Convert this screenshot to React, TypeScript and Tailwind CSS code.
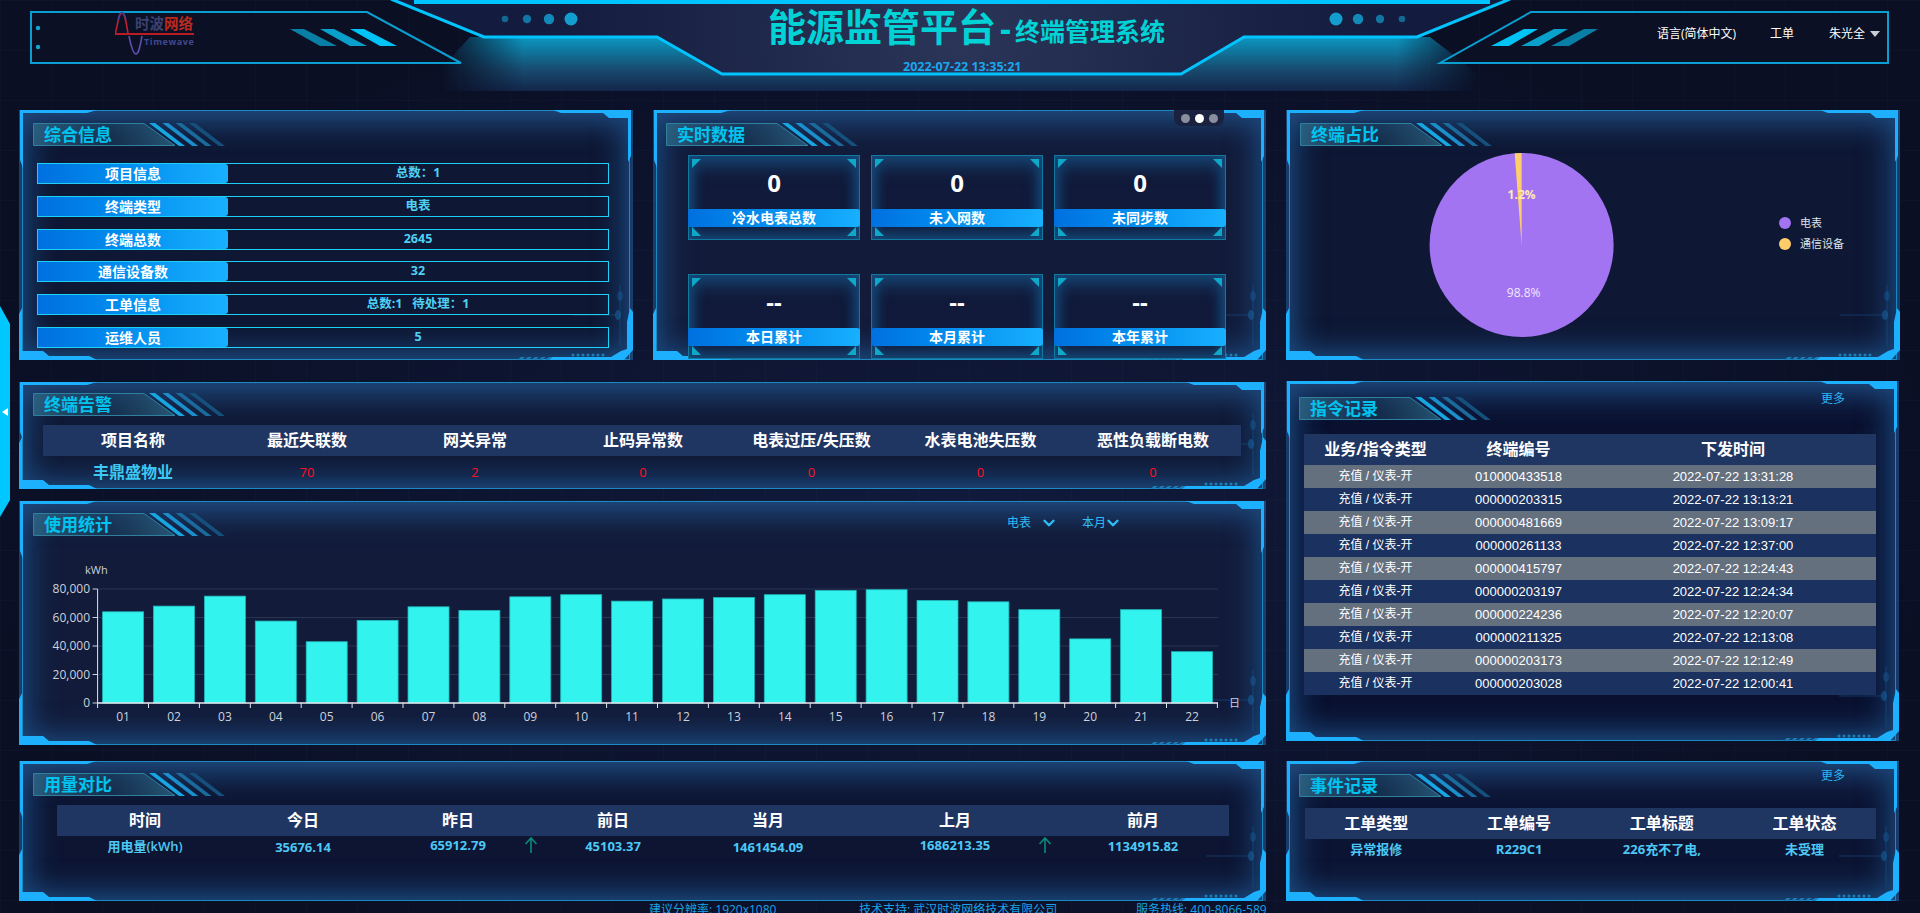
import React from "react";
import { ChevronDown } from "lucide-react";

const BR = "#1cb0ff";

function Frame({ w, h }: { w: number; h: number }) {
  const dots = [0, 1, 2, 3, 4, 5, 6];
  return (
    <svg className="absolute left-0 top-0 pointer-events-none" width={w} height={h} viewBox={`0 0 ${w} ${h}`}>
      <rect x={3.5} y={0.5} width={w - 7} height={h - 1} fill="none" stroke="#1b8ac2" strokeWidth={1} />
      <polygon fill={BR} points={`1,0 78,0 68,3 4,3 4,58 1,50`} />
      <polygon fill={BR} points={`${w - 80},0 ${w - 2},0 ${w - 2},46 ${w - 5},52 ${w - 5},8 ${w - 24},8 ${w - 30},3 ${w - 72},3`} />
      <polygon fill={BR} points={`0,${h - 46} 3,${h - 52} 3,${h - 9} 24,${h - 9} 30,${h - 4} 70,${h - 4} 78,${h} 0,${h}`} />
      <polygon
        fill={BR}
        points={`${w},${h - 48} ${w},${h - 10} ${w - 9},${h} ${w - 90},${h} ${w - 82},${h - 3} ${w - 22},${h - 3} ${w - 12},${h - 9} ${w - 6},${h - 11} ${w - 6},${h - 38} ${w - 3},${h - 52}`}
      />
      {dots.map((d) => (
        <circle key={d} cx={w - 60 + d * 5} cy={h - 5} r={1.5} fill="#1a7fb8" />
      ))}
      {[0, 1, 2, 3, 4].map((d) => (
        <polygon key={d} fill="#1a7fb8" points={`${w - 116 + d * 7},${h} ${w - 112 + d * 7},${h - 3} ${w - 108 + d * 7},${h - 3} ${w - 112 + d * 7},${h}`} />
      ))}
      <path d={`M${w - 13} ${h - 75} V${h - 14} M${w - 60} ${h - 45} H${w - 17}`} stroke="#1a5f98" strokeWidth={1} fill="none" opacity={0.45} />
      <ellipse cx={w - 15} cy={h - 45} rx={3} ry={5} fill="#1a6aa8" opacity={0.5} />
      <ellipse cx={w - 13} cy={h - 64} rx={3} ry={5} fill="#1a6aa8" opacity={0.35} />
    </svg>
  );
}

function Title({ text, className }: { text: string; className: string }) {
  return (
    <div className={`relative h-[23px] w-[196px] ${className}`}>
      <svg className="absolute left-0 top-0" width={196} height={23} viewBox="0 0 196 23">
        <defs>
          <linearGradient id="tg" x1="0" x2="1" y1="0" y2="0">
            <stop offset="0" stopColor="#2c6684" stopOpacity={0.85} />
            <stop offset="0.55" stopColor="#1c4260" stopOpacity={0.5} />
            <stop offset="1" stopColor="#2c6684" stopOpacity={0.8} />
          </linearGradient>
        </defs>
        <polygon points="0.5,0.5 111,0.5 142,22.5 0.5,22.5" fill="url(#tg)" stroke="#2f7f9f" strokeWidth={1} />
        {["#16a6e2", "#1a8fcb", "#1b6a9c", "#15507c"].map((c, i) => (
          <polygon key={c} fill={c} points={`${116 + 13.3 * i},0 ${122 + 13.3 * i},0 ${152 + 13.3 * i},23 ${146 + 13.3 * i},23`} />
        ))}
      </svg>
      <span className="relative block pl-[11px] text-[17px] font-bold leading-[23px] text-[#00c4f0]">{text}</span>
    </div>
  );
}

function Panel({
  w,
  h,
  sizeClass,
  bgClass,
  children,
}: {
  w: number;
  h: number;
  sizeClass: string;
  bgClass: string;
  children: React.ReactNode;
}) {
  return (
    <div
      className={`relative shrink-0 ${sizeClass} ${bgClass} shadow-[inset_0_30px_28px_-16px_#1f4a7e,inset_0_-26px_28px_-16px_#1c4a7e,inset_30px_0_30px_-20px_#1c4a7e,inset_-30px_0_30px_-20px_#1c4a7e]`}
    >
      <Frame w={w} h={h} />
      <div className="relative flow-root">{children}</div>
    </div>
  );
}

const infoRows = [
  ["项目信息", "总数：1"],
  ["终端类型", "电表"],
  ["终端总数", "2645"],
  ["通信设备数", "32"],
  ["工单信息", "总数:1   待处理：1"],
  ["运维人员", "5"],
];

const cards = [
  ["0", "冷水电表总数"],
  ["0", "未入网数"],
  ["0", "未同步数"],
  ["--", "本日累计"],
  ["--", "本月累计"],
  ["--", "本年累计"],
];

const alarmHead = ["项目名称", "最近失联数", "网关异常", "止码异常数", "电表过压/失压数", "水表电池失压数", "恶性负载断电数"];
const alarmVals = ["70", "2", "0", "0", "0", "0"];

const usage = [64000, 68000, 75000, 57500, 43000, 58000, 67500, 65000, 74500, 76000, 71500, 73000, 74000, 76000, 79000, 79500, 72000, 71000, 65500, 45000, 65500, 36000];

const cmpHead = ["时间", "今日", "昨日", "前日", "当月", "上月", "前月"];
const cmpVals = ["用电量(kWh)", "35676.14", "65912.79", "45103.37", "1461454.09", "1686213.35", "1134915.82"];
const cmpPad = ["pt-[1px]", "pt-[2px]", "pt-0", "pt-[1px]", "pt-[2px]", "pt-0", "pt-[1px]"];

const cmds = [
  ["010000433518", "2022-07-22 13:31:28"],
  ["000000203315", "2022-07-22 13:13:21"],
  ["000000481669", "2022-07-22 13:09:17"],
  ["000000261133", "2022-07-22 12:37:00"],
  ["000000415797", "2022-07-22 12:24:43"],
  ["000000203197", "2022-07-22 12:24:34"],
  ["000000224236", "2022-07-22 12:20:07"],
  ["000000211325", "2022-07-22 12:13:08"],
  ["000000203173", "2022-07-22 12:12:49"],
  ["000000203028", "2022-07-22 12:00:41"],
];

function HeaderArt() {
  const slashes = (x: number, dir: number) =>
    [0, 1, 2].map((i) => {
      const colors = dir > 0 ? ["#0a7fa6", "#0aa0cc", "#00c4f5"] : ["#00c4f5", "#0aa0cc", "#0a7fa6"];
      const base = x + i * 30;
      return dir > 0 ? (
        <polygon key={i} fill={colors[i]} points={`${base},29 ${base + 14},29 ${base + 47},46 ${base + 30},46`} />
      ) : (
        <polygon key={i} fill={colors[i]} points={`${base + 33},29 ${base + 47},29 ${base + 18},46 ${base},46`} />
      );
    });
  return (
    <svg className="absolute left-0 top-0" width={1920} height={110} viewBox="0 0 1920 110">
      <defs>
        <linearGradient id="hg" x1="0" x2="0" y1="36" y2="91" gradientUnits="userSpaceOnUse">
          <stop offset="0" stopColor="#0a9ac4" />
          <stop offset="0.6" stopColor="#174c70" />
          <stop offset="1" stopColor="#13264a" />
        </linearGradient>
        <linearGradient id="hm" x1="440" x2="1480" y1="0" y2="0" gradientUnits="userSpaceOnUse">
          <stop offset="0" stopColor="#000" />
          <stop offset="0.08" stopColor="#fff" />
          <stop offset="0.92" stopColor="#fff" />
          <stop offset="1" stopColor="#000" />
        </linearGradient>
        <mask id="hmask" maskUnits="userSpaceOnUse" x="0" y="0" width="1920" height="110">
          <rect x="0" y="0" width="1920" height="110" fill="url(#hm)" />
        </mask>
        <radialGradient id="hp" cx="960" cy="40" r="420" gradientUnits="userSpaceOnUse">
          <stop offset="0" stopColor="#2a3558" />
          <stop offset="1" stopColor="#131b3e" />
        </radialGradient>
      </defs>
      <path d="M470 37 H657 L722 74 H1181 L1244 37 H1430 L1500 91 H420 Z" fill="url(#hg)" mask="url(#hmask)" />
      <polygon points="395,0 1508,0 1417,37 1244,37 1181,74 722,74 657,37 484,37" fill="url(#hp)" />
      <polyline points="391,-1 484,37 657,37 722,74 1181,74 1244,37 1417,37 1510,-1" fill="none" stroke="#00c4ff" strokeWidth={3} />
      <rect x={414} y={0} width={1076} height={4} fill="#00c4ff" />
      {[
        [505, 3.3, 0.55],
        [527, 4.2, 0.65],
        [549, 5.2, 0.8],
        [571, 6.5, 0.95],
        [1336, 6.5, 0.95],
        [1358, 5.2, 0.8],
        [1380, 4.2, 0.65],
        [1402, 3.3, 0.55],
      ].map(([x, r, o]) => (
        <circle key={x} cx={x} cy={19} r={r} fill="#12a6d8" opacity={o} />
      ))}
      <polygon points="31,12 367,12 461,63 31,63" fill="#0b1024" fillOpacity={0.6} stroke="#0a9fd0" strokeWidth={2} />
      <polygon points="1531,12 1888,12 1888,63 1440,63" fill="#0b1024" fillOpacity={0.6} stroke="#0a9fd0" strokeWidth={2} />
      <circle cx={38} cy={28} r={2.2} fill="#0fa8d0" />
      <circle cx={38} cy={47} r={2.2} fill="#0fa8d0" />
      {slashes(290, 1)}
      {slashes(1491, -1)}
    </svg>
  );
}

function Logo() {
  return (
    <div className="relative h-[44px] w-[80px]">
      <svg className="absolute left-0 top-0" width={80} height={44} viewBox="0 0 80 44">
        <path d="M0.5 21 C3 10 4 1 7 1 C10 1 11 10 13 21" fill="none" stroke="#c02030" strokeWidth={1.6} />
        <path d="M3 8 C4 3 5 0.5 7 0.5 C9 0.5 10 3 11 8" fill="none" stroke="#3a3f9a" strokeWidth={1.4} />
        <rect x={0} y={21} width={79} height={2} fill="#b81c24" />
        <path d="M14 24 C16 34 18 42 21 42 C24 42 25 34 27 24" fill="none" stroke="#5a50b0" strokeWidth={1.6} />
      </svg>
      <span className="absolute left-[20px] top-[2px] whitespace-nowrap text-[14.5px] font-bold leading-[19px]">
        <span className="text-[#3b4170]">时波</span>
        <span className="text-[#b82a20]">网络</span>
      </span>
      <span className="absolute left-[29px] top-[24px] whitespace-nowrap text-[9px] font-bold leading-[11px] tracking-[0.6px] text-[#41488f]">
        Timewave
      </span>
    </div>
  );
}

function Header() {
  return (
    <div className="relative flex h-[110px]">
      <HeaderArt />
      <div className="relative w-[768px] shrink-0 pl-[115px] pt-[12px]">
        <Logo />
      </div>
      <div className="relative w-[410px] shrink-0">
        <div className="h-[50px] whitespace-nowrap pt-[1px] text-[#00d2d6]">
          <span className="text-[38px] font-bold leading-[50px]">能源监管平台</span>
          <span className="mx-[4px] text-[34px] font-bold leading-[50px]">-</span>
          <span className="text-[25px] font-bold leading-[50px]">终端管理系统</span>
        </div>
        <div className="ml-[135px] mt-[9px] whitespace-nowrap text-[12.5px] font-bold leading-[16px] text-[#1aa7ec]">
          2022-07-22 13:35:21
        </div>
      </div>
      <div className="relative flex flex-1 items-start justify-end pr-[40px] pt-[25px] text-[12px] leading-[17px] text-white">
        <span className="mr-[34px]">语言(简体中文)</span>
        <span className="mr-[35px]">工单</span>
        <span>朱光全</span>
        <span className="ml-[5px] mt-[6px] h-0 w-0 border-x-[5px] border-t-[6px] border-x-transparent border-t-[#c8ccd4]" />
      </div>
    </div>
  );
}

function InfoPanel() {
  return (
    <Panel w={614} h={250} sizeClass="w-[614px] h-[250px]" bgClass="bg-[#0e1734]">
      <Title text="综合信息" className="ml-[14px] mt-[13px]" />
      <div className="ml-[18px] mt-[17px] flex h-[185px] w-[572px] flex-col justify-between">
        {infoRows.map(([k, v]) => (
          <div key={k} className="flex h-[21px] border border-[#1fd0f5]">
            <div className="w-[190px] rounded-r-[3px] bg-linear-to-r from-[#0070e0] to-[#18b0ff] text-center text-[14px] font-bold leading-[19px] text-white">
              {k}
            </div>
            <div className="flex-1 whitespace-pre text-center text-[12.5px] font-bold leading-[17px] text-[#4fd1f5]">{v}</div>
          </div>
        ))}
      </div>
    </Panel>
  );
}

function Card({ v, label }: { v: string; label: string }) {
  return (
    <div className="relative h-[85px] border border-[#0f7a9e] bg-[#111a3a] shadow-[inset_0_14px_18px_-6px_#164a7a,inset_0_-12px_14px_-6px_#164a7a,inset_14px_0_14px_-10px_#164a7a,inset_-14px_0_14px_-10px_#164a7a]">
      <svg className="absolute left-0 top-0" width={170} height={83} viewBox="0 0 170 83">
        <polygon points="3,3 12,3 3,12" fill="#0fa8c8" />
        <polygon points="167,3 158,3 167,12" fill="#0fa8c8" />
        <polygon points="3,80 3,71 12,80" fill="#0fa8c8" />
        <polygon points="167,80 167,71 158,80" fill="#0fa8c8" />
      </svg>
      <div className="relative flex h-[53px] items-center justify-center text-[24px] font-bold text-white">{v}</div>
      <div className="relative -mx-[1px] h-[18px] rounded-[3px] bg-linear-to-r from-[#0070e0] to-[#18b0ff] text-center text-[14px] font-bold leading-[18px] text-white">
        {label}
      </div>
    </div>
  );
}

function RealtimePanel() {
  return (
    <Panel w={613} h={250} sizeClass="w-[613px] h-[250px]" bgClass="bg-[#121b3a]">
      <Title text="实时数据" className="ml-[13px] mt-[13px]" />
      <div className="ml-[35px] mt-[9px] grid w-[538px] grid-cols-[172px_172px_172px] gap-x-[11px] gap-y-[34px]">
        {cards.map(([v, l]) => (
          <Card key={l} v={v} label={l} />
        ))}
      </div>
      <div className="absolute left-[521px] top-0 flex h-[16px] w-[50px] items-center justify-center gap-[5px] rounded-b-[8px] bg-[#1a2240]">
        <span className="h-[9px] w-[9px] rounded-full bg-[#8a8fa0]" />
        <span className="h-[9px] w-[9px] rounded-full bg-white" />
        <span className="h-[9px] w-[9px] rounded-full bg-[#8a8fa0]" />
      </div>
    </Panel>
  );
}

function PiePanel() {
  const cx = 235.6;
  const cy = 99;
  const r = 92;
  return (
    <Panel w={614} h={250} sizeClass="w-[614px] h-[250px]" bgClass="bg-[#0e1734]">
      <Title text="终端占比" className="ml-[14px] mt-[13px]" />
      <svg className="block" width={614} height={204} viewBox="0 0 614 204">
        <circle cx={cx} cy={cy} r={r} fill="#a274f2" />
        <path d={`M${cx} ${cy} L${cx - 6.93} ${cy - 91.74} A${r} ${r} 0 0 1 ${cx} ${cy - r} Z`} fill="#ffce6b" />
        <text x={cx} y={53} textAnchor="middle" fontSize={12} fontWeight={700} fill="#ffeab0">
          1.2%
        </text>
        <text x={cx + 2} y={151} textAnchor="middle" fontSize={12} fill="#f2e9ff">
          98.8%
        </text>
        <circle cx={499} cy={77} r={6} fill="#a274f2" />
        <circle cx={499} cy={98} r={6} fill="#ffce6b" />
        <text x={514} y={81} fontSize={11} fill="#dfe3ea">
          电表
        </text>
        <text x={514} y={102} fontSize={11} fill="#dfe3ea">
          通信设备
        </text>
      </svg>
    </Panel>
  );
}

function AlarmPanel() {
  return (
    <Panel w={1247} h={107} sizeClass="w-[1247px] h-[107px]" bgClass="bg-[#101936]">
      <Title text="终端告警" className="ml-[14px] mt-[11px]" />
      <div className="ml-[24px] mt-[9px] w-[1198px]">
        <div className="grid h-[31px] grid-cols-[180px_168px_168px_168px_169px_169px_176px] bg-[#1f3663] text-center text-[16px] font-bold leading-[31px] text-white">
          {alarmHead.map((t) => (
            <div key={t}>{t}</div>
          ))}
        </div>
        <div className="grid h-[32px] grid-cols-[180px_168px_168px_168px_169px_169px_176px] text-center leading-[32px]">
          <div className="text-[16px] font-bold text-[#3cc8f2]">丰鼎盛物业</div>
          {alarmVals.map((t, i) => (
            <div key={i} className="text-[13px] text-[#ff1020]">
              {t}
            </div>
          ))}
        </div>
      </div>
    </Panel>
  );
}

function UsagePanel() {
  const zero = 158;
  const top = 44;
  const x0 = 78.6;
  const pitch = 50.9;
  const ticks = [0, 20000, 40000, 60000, 80000];
  return (
    <Panel w={1247} h={244} sizeClass="w-[1247px] h-[244px]" bgClass="bg-[#121b3a]">
      <div className="flex items-start justify-between">
        <Title text="使用统计" className="ml-[14px] mt-[12px]" />
        <div className="mr-[144px] mt-[13px] flex items-center text-[12px] leading-[16px] text-[#2fbdf5]">
          <span>电表</span>
          <ChevronDown size={18} strokeWidth={3.2} className="ml-[9px]" />
          <span className="ml-[24px]">本月</span>
          <ChevronDown size={18} strokeWidth={3.2} className="-ml-[2px]" />
        </div>
      </div>
      <svg className="mt-[9px] block" width={1247} height={190} viewBox="0 0 1247 190">
        <text x={66} y={29} fontSize={11} fill="#ccd2dc">
          kWh
        </text>
        {ticks.map((t) => {
          const y = zero - ((zero - top) * t) / 80000;
          return (
            <g key={t}>
              {t > 0 && <line x1={x0} x2={1199} y1={y} y2={y} stroke="#2a3550" strokeWidth={1} />}
              <line x1={x0 - 5} x2={x0} y1={y} y2={y} stroke="#ccd2dc" strokeWidth={1} />
              <text x={71} y={y + 4} textAnchor="end" fontSize={12} fill="#ccd2dc">
                {t.toLocaleString("en-US")}
              </text>
            </g>
          );
        })}
        {usage.map((v, i) => {
          const hh = ((zero - top) * v) / 80000;
          const x = x0 + pitch * i + 5;
          const lab = String(i + 1).padStart(2, "0");
          return (
            <g key={lab}>
              <rect x={x} y={zero - hh} width={41} height={hh} fill="#32f3ee" stroke="#1fb8ba" strokeWidth={0.8} />
              <text x={x + 20.5} y={zero + 18} textAnchor="middle" fontSize={12} fill="#ccd2dc">
                {lab}
              </text>
            </g>
          );
        })}
        <line x1={x0} x2={x0} y1={top} y2={zero} stroke="#dfe3ea" strokeWidth={1} />
        <line x1={x0} x2={1199} y1={zero} y2={zero} stroke="#e8ebf0" strokeWidth={1.5} />
        {Array.from({ length: 23 }).map((_, i) => (
          <line key={i} x1={x0 + pitch * i} x2={x0 + pitch * i} y1={zero} y2={zero + 5} stroke="#dfe3ea" strokeWidth={1} />
        ))}
        <text x={1210} y={zero + 4} fontSize={11} fill="#ccd2dc">
          日
        </text>
      </svg>
    </Panel>
  );
}

function UpArrow() {
  return (
    <svg className="absolute right-[4px] top-0" width={16} height={18} viewBox="0 0 16 18">
      <path d="M8 17 V2 M2.5 8 L8 2 L13.5 8" fill="none" stroke="#0a8a78" strokeWidth={1.6} />
    </svg>
  );
}

function ComparePanel() {
  return (
    <Panel w={1247} h={140} sizeClass="w-[1247px] h-[140px]" bgClass="bg-[#0d1533]">
      <Title text="用量对比" className="ml-[14px] mt-[12px]" />
      <div className="ml-[38px] mt-[9px] w-[1172px]">
        <div className="grid h-[31px] grid-cols-[176px_140px_170px_140px_170px_204px_172px] bg-[#1f3663] text-center text-[16px] font-bold leading-[31px] text-white">
          {cmpHead.map((t) => (
            <div key={t}>{t}</div>
          ))}
        </div>
        <div className="grid h-[22px] grid-cols-[176px_140px_170px_140px_170px_204px_172px] text-center text-[13px] leading-[18px] text-[#4dc8f5]">
          {cmpVals.map((t, i) => (
            <div key={t} className={`relative ${cmpPad[i]} ${i === 0 ? "font-semibold" : "font-bold"}`}>
              {t}
              {(i === 2 || i === 5) && <UpArrow />}
            </div>
          ))}
        </div>
      </div>
    </Panel>
  );
}

function CommandPanel() {
  return (
    <Panel w={613} h={360} sizeClass="w-[613px] h-[360px]" bgClass="bg-[#0a1130]">
      <div className="flex items-start justify-between">
        <Title text="指令记录" className="ml-[13px] mt-[16px]" />
        <span className="mr-[54px] mt-[10px] text-[12px] leading-[16px] text-[#29b6f6]">更多</span>
      </div>
      <div className="ml-[18px] mt-[14px] w-[572px]">
        <div className="grid h-[31px] grid-cols-[143px_143px_286px] bg-[#1f3663] text-center text-[16px] font-bold leading-[31px] text-white">
          <div>业务/指令类型</div>
          <div>终端编号</div>
          <div>下发时间</div>
        </div>
        {cmds.map(([id, time], i) => (
          <div
            key={id}
            className={`grid h-[23px] grid-cols-[143px_143px_286px] text-center font-['Liberation_Sans','Noto_Sans_CJK_SC',sans-serif] leading-[23px] text-white ${
              i % 2 === 0 ? "bg-[#65707f]" : "bg-[#1b3260]"
            }`}
          >
            <div className="text-[12px]">充值 / 仪表-开</div>
            <div className="text-[13px]">{id}</div>
            <div className="text-[13px]">{time}</div>
          </div>
        ))}
      </div>
    </Panel>
  );
}

function EventPanel() {
  return (
    <Panel w={613} h={140} sizeClass="w-[613px] h-[140px]" bgClass="bg-[#0c1433]">
      <div className="flex items-start justify-between">
        <Title text="事件记录" className="ml-[13px] mt-[13px]" />
        <span className="mr-[54px] mt-[7px] text-[12px] leading-[16px] text-[#29b6f6]">更多</span>
      </div>
      <div className="ml-[19px] mt-[11px] w-[571px]">
        <div className="grid h-[31px] grid-cols-4 bg-[#1f3663] text-center text-[16px] font-bold leading-[31px] text-white">
          <div>工单类型</div>
          <div>工单编号</div>
          <div>工单标题</div>
          <div>工单状态</div>
        </div>
        <div className="grid h-[20px] grid-cols-4 text-center text-[13px] font-bold leading-[20px] text-[#4dc8f5]">
          <div>异常报修</div>
          <div>R229C1</div>
          <div>226充不了电,</div>
          <div>未受理</div>
        </div>
      </div>
    </Panel>
  );
}

export default function App() {
  return (
    <div className="relative h-[913px] w-[1920px] overflow-hidden bg-[#0a0f24] bg-[linear-gradient(rgba(60,110,170,0.05)_1px,transparent_1px),linear-gradient(90deg,rgba(60,110,170,0.05)_1px,transparent_1px),radial-gradient(ellipse_at_50%_55%,#111a3c_0%,#0a0f24_75%)] bg-[size:51px_50px,51px_50px,100%_100%] font-['Open_Sans','Noto_Sans_CJK_SC',sans-serif]">
      <Header />
      <div className="flex gap-[20px] pl-[19px]">
        <div className="flex w-[1247px] shrink-0 flex-col">
          <div className="flex gap-[20px]">
            <InfoPanel />
            <RealtimePanel />
          </div>
          <div className="mt-[22px]">
            <AlarmPanel />
          </div>
          <div className="mt-[12px]">
            <UsagePanel />
          </div>
          <div className="mt-[16px]">
            <ComparePanel />
          </div>
        </div>
        <div className="flex w-[614px] shrink-0 flex-col">
          <PiePanel />
          <div className="mt-[21px]">
            <CommandPanel />
          </div>
          <div className="mt-[20px]">
            <EventPanel />
          </div>
        </div>
      </div>
      <div className="mt-[1px] flex whitespace-nowrap pl-[649px] text-[12px] leading-[16px] text-[#1aa3e8]">
        <span className="w-[210px]">建议分辨率: 1920x1080</span>
        <span className="w-[277px]">技术支持: 武汉时波网络技术有限公司</span>
        <span>服务热线: 400-8066-589</span>
      </div>
      <svg className="absolute left-0 top-[306px]" width={11} height={211} viewBox="0 0 11 211">
        <polygon points="0,0 10,18 10,194 0,211" fill="#00c8ff" />
        <polygon points="8,102 8,110 2,106" fill="#ffffff" />
      </svg>
    </div>
  );
}
